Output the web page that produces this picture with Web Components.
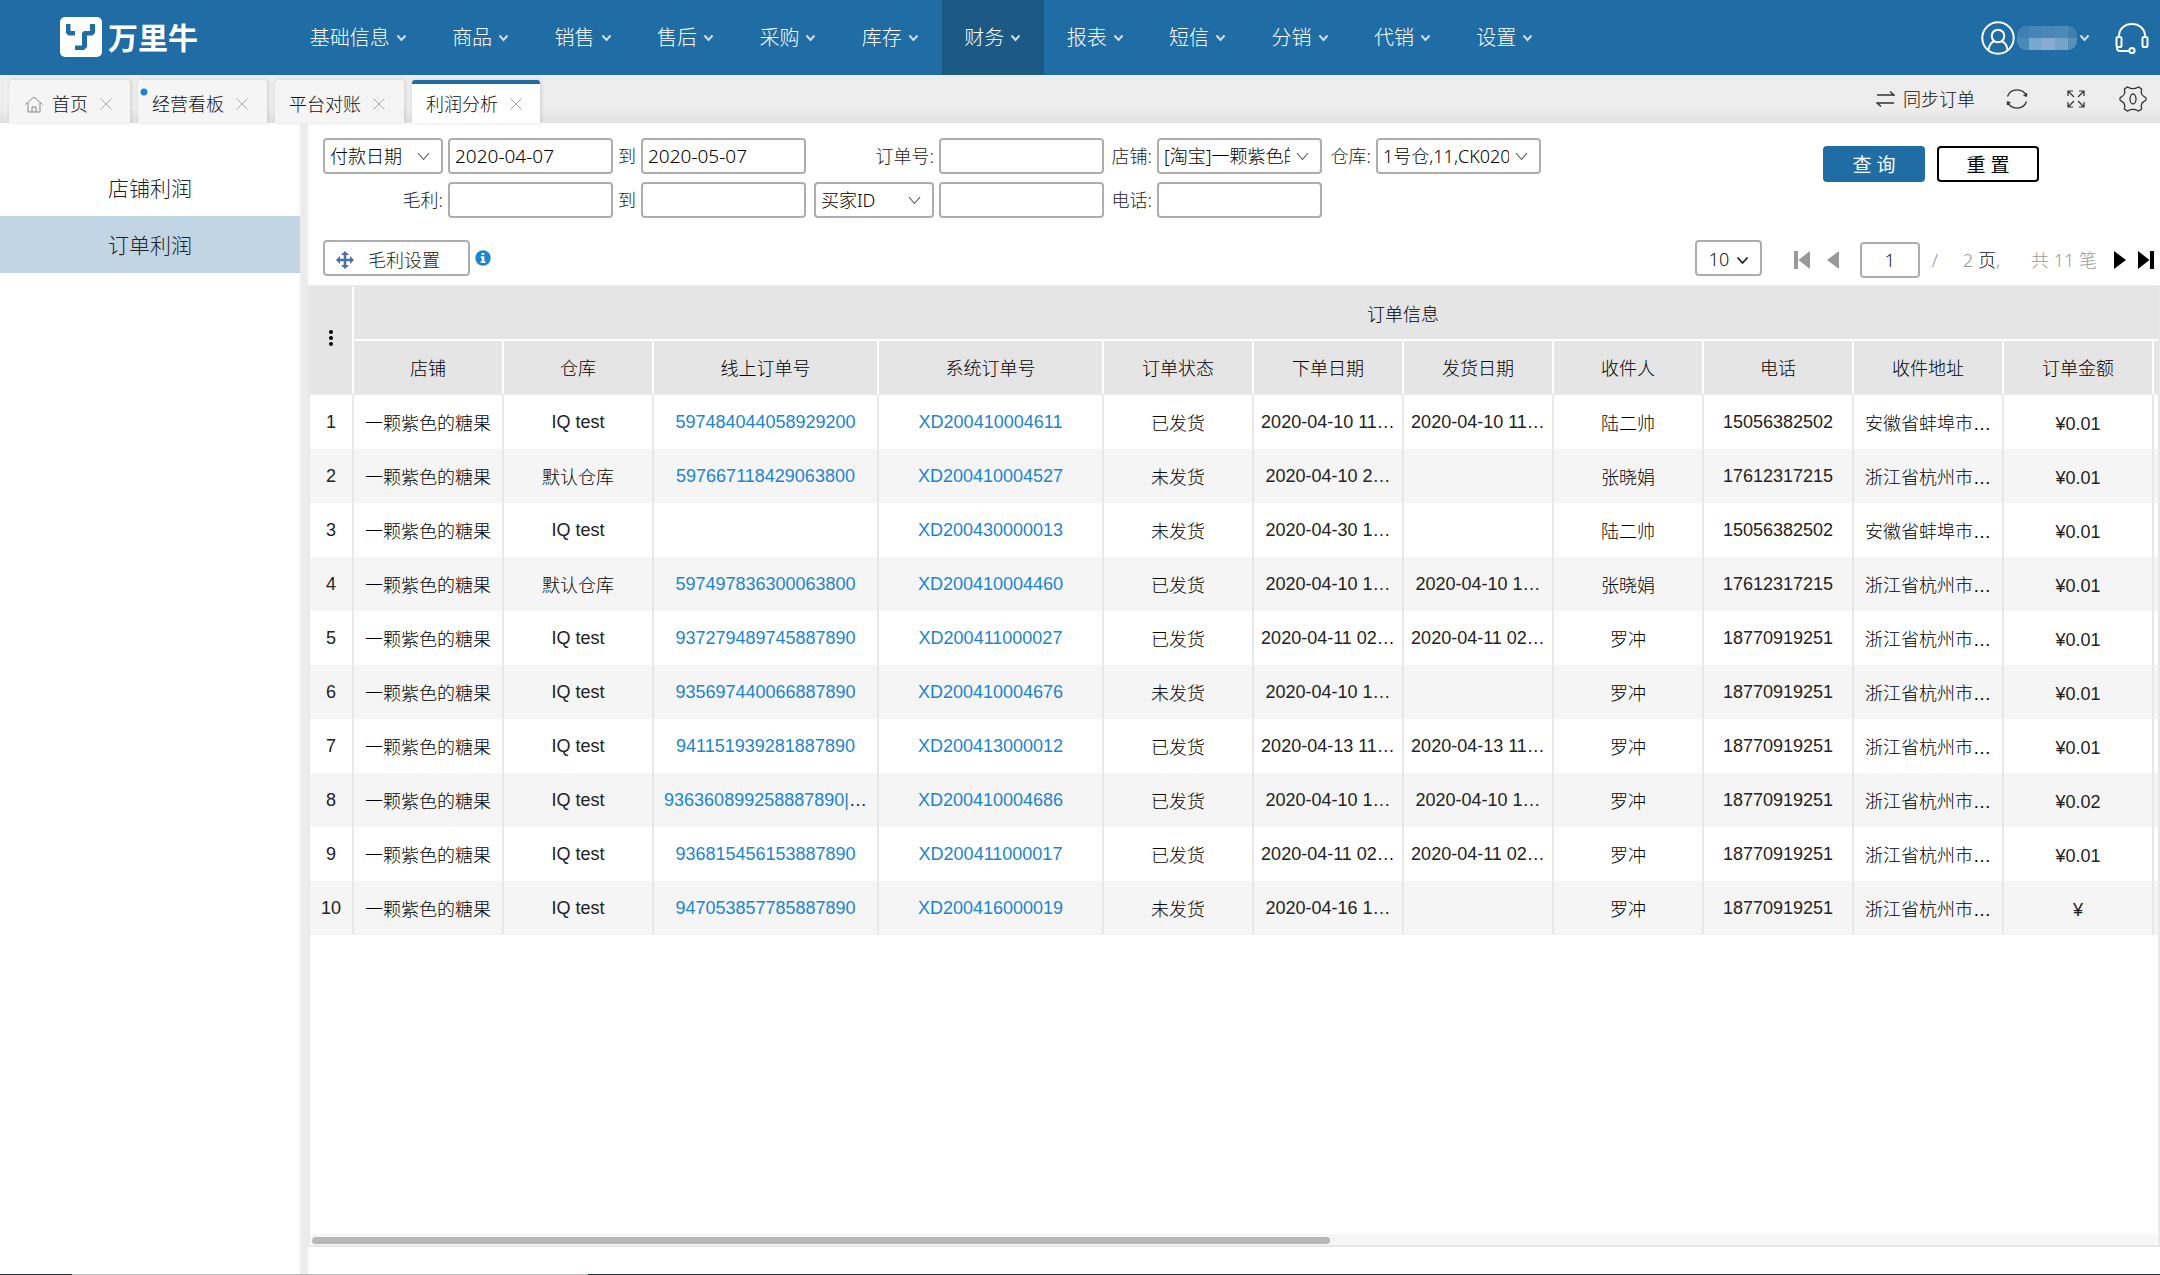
<!DOCTYPE html>
<html lang="zh-CN">
<head>
<meta charset="utf-8">
<title>万里牛 - 利润分析</title>
<style>
html, body { margin: 0; height: 100%; }
body { font: 300 18px/24px "Noto Sans", "Noto Sans CJK SC", sans-serif; color: #111; background: #fff; }
</style>
</head>
<body>
<erp-app></erp-app>
<script>
const BASE = `*{box-sizing:border-box}
button,input,select{font:inherit;color:inherit;margin:0}
button{background:none;border:0;padding:0;cursor:pointer}
a{color:inherit;text-decoration:none}
svg{display:block;flex:none}`;

function define(name, css, html) {
  const template = document.createElement('template');
  template.innerHTML = `<style>${BASE}${css}</style>${typeof html === 'string' ? html : ''}`;
  customElements.define(name, class extends HTMLElement {
    constructor() {
      super();
      this.attachShadow({ mode: 'open' }).append(template.content.cloneNode(true));
    }
    connectedCallback() {
      if (typeof html === 'function' && !this.ready) {
        this.ready = true;
        this.shadowRoot.append(document.createRange().createContextualFragment(html(this)));
      }
    }
  });
}

/* one entry of the main navigation */
define('nav-item', `
:host{display:flex;flex:1 1 auto}
a{flex:1;display:flex;align-items:center;justify-content:center;gap:6px;padding:0 22px;font-size:20px;color:#fff;white-space:nowrap}
:host([active]) a{background:#1c5985}`,
`<a href="#"><slot></slot><svg width="11" height="8" viewBox="0 0 11 8" fill="none" stroke="#cfe0ee" stroke-width="2"><path d="M1.5 1.5l4 4.5 4-4.5"/></svg></a>`);

define('app-header', `
:host{display:flex;height:75px;background:#206ca5;color:#fff;flex:none}
.brand{display:flex;align-items:center;gap:6px;width:287px;padding-left:60px;flex:none;font-size:30px;font-weight:700}
nav{display:flex;flex:0 1 1269px}
.user{display:flex;align-items:center;margin-left:auto;gap:2px}
.support{padding:0 11px 0 25px}
.mask{display:grid;grid-template-columns:12px repeat(3,13px) 9px;grid-template-rows:12px 12px;border-radius:9px;overflow:hidden}`,
`<a class="brand" href="#"><svg width="42" height="41" viewBox="0 0 42 41"><rect width="42" height="40" rx="5" fill="#fff"/><path d="M6 7h4.500v7H15v4.500H8.500L6 16zM30 7h5v9l-2.500 2.500H27V30l-3 3h-9v-4.500h7V16l2-2h6z" fill="#206ca5"/></svg><span>万里牛</span></a>
<nav><nav-item>基础信息</nav-item><nav-item>商品</nav-item><nav-item>销售</nav-item><nav-item>售后</nav-item><nav-item>采购</nav-item><nav-item>库存</nav-item><nav-item active>财务</nav-item><nav-item>报表</nav-item><nav-item>短信</nav-item><nav-item>分销</nav-item><nav-item>代销</nav-item><nav-item>设置</nav-item></nav>
<button class="user" aria-label="账户"><svg width="34" height="34" viewBox="0 0 34 34" fill="none" stroke="#fff" stroke-width="2"><circle cx="17" cy="17" r="15.7"/><circle cx="17" cy="15" r="6.3"/><path d="M7.500 29c.5-5 3-8 6.500-9M26.500 29c-.5-5-3-8-6.500-9"/></svg>
<span class="mask"><i style="background:#3f7fb1"></i><i style="background:#4585b7"></i><i style="background:#4888b7"></i><i style="background:#4c8ab8"></i><i style="background:#4280b0"></i><i style="background:#4a8aba"></i><i style="background:#78a9cc"></i><i style="background:#8cabd3"></i><i style="background:#76a3ca"></i><i style="background:#588fbd"></i></span>
<svg width="11" height="8" viewBox="0 0 11 8" fill="none" stroke="#cfe0ee" stroke-width="2"><path d="M1.500 1.500l4 4.500 4-4.500"/></svg></button>
<button class="support" aria-label="客服"><svg width="34" height="32" viewBox="0 0 34 32" fill="none" stroke="#fff" stroke-width="2"><path d="M4 15v-1C4 6.500 10 2 17 2s13 4.500 13 12v1"/><rect x="1.500" y="15" width="5" height="10" rx="1.500"/><rect x="27.500" y="15" width="5" height="10" rx="1.500"/><path d="M2 24v2c0 2 1 3 3 3h9"/><circle cx="17" cy="28.500" r="2.600"/></svg></button>`);

define('tab-item', `
:host{display:flex}
div{flex:1;display:flex;align-items:center;gap:12px;padding:5px 19px 0 14px;background:#f5f5f5;border-radius:3px 3px 0 0;box-shadow:1px 0 4px #0002}
:host([home]) div{padding:5px 18px 0 16px}
:host([active]) div{background:#fff;border-top:4px solid #206ca5;padding-top:1px;padding-right:18px}
a{display:flex;align-items:center;gap:9px}
:host([unread]) div{background:radial-gradient(circle at 6px 12px,#1c84d0 3px,#f5f5f5 4px)}`,
`<div><a href="#"><slot></slot></a><button aria-label="关闭"><svg width="12" height="12" viewBox="0 0 12 12" stroke="#aaa" stroke-width="1"><path d="M.5.500l11 11M11.500.500l-11 11"/></svg></button></div>`);

define('tab-bar', `
:host{display:flex;height:48px;flex:none;padding-left:9px;background:linear-gradient(#ededed 70%,#e0e0e0)}
.tabs{display:flex;gap:8px;padding-top:5px}
.tools{display:flex;align-items:center;margin-left:auto;padding:0 13px 0 0}
.tools button{display:flex;align-items:center;gap:8px}`,
`<div class="tabs">
<tab-item home><svg width="18" height="17" viewBox="0 0 18 17" fill="none" stroke="#888" stroke-width="1"><path d="M.5 8.500L9 1l8.500 7.500M3 7v9h12V7M7 16v-5h4v5"/></svg>首页</tab-item>
<tab-item unread>经营看板</tab-item><tab-item>平台对账</tab-item><tab-item active>利润分析</tab-item></div>
<div class="tools">
<button><svg width="19" height="18" viewBox="0 0 19 18" fill="none" stroke="#333" stroke-width="1.500"><path d="M1 5h17l-4-3.500M18 13H1l4 3.500"/></svg>同步订单</button>
<button aria-label="刷新" style="margin-left:31px"><svg width="22" height="22" viewBox="0 0 22 22" fill="none" stroke="#333" stroke-width="1.300"><path d="M1.500 8.500a10 9.500 0 0 1 19 0V5M20.500 13.500a10 9.500 0 0 1-19 0V17M20.500 8.500l-3-1.500M1.500 13.500l3 1.500"/></svg></button>
<button aria-label="全屏" style="margin-left:39px"><svg width="18" height="18" viewBox="0 0 18 18" fill="none" stroke="#333" stroke-width="1.200"><path d="M1 6V1h5M1 1l6 6M12 1h5v5M17 1l-6 6M1 12v5h5M1 17l6-6M17 12v5h-5M17 17l-6-6"/></svg></button>
<button aria-label="设置" style="margin-left:34px"><svg width="28" height="26" viewBox="0 0 28 26" fill="none" stroke="#333" stroke-width="1.300"><path d="M8.500 1c1 0 1.500 1.700 5.500 1.700S18.500 1 19.500 1l3 2c.5 1-.5 2-.3 3.500.3 2.500 1.500 3.500 3 4.200 1.500.5 2 1 2 2.300s-.5 1.800-2 2.300c-1.500.7-2.700 1.700-3 4.200-.2 1.500.8 2.500.3 3.500l-3 2c-1 0-1.500-1.700-5.500-1.700S9.500 25 8.500 25l-3-2c-.5-1 .5-2 .3-3.500-.3-2.500-1.500-3.500-3-4.200-1.500-.5-2-1-2-2.300s.5-1.800 2-2.300c1.500-.7 2.700-1.700 3-4.200C6 5 5 4 5.500 3z"/><ellipse cx="14" cy="13" rx="3" ry="5"/></svg></button>
</div>`);

define('side-menu', `
:host{display:block;flex:none;width:308px;border-right:8px solid #ececec;padding-top:36px}
a{display:flex;align-items:center;justify-content:center;height:57px;font-size:21px;color:#222}
a[aria-current]{background:#c2d5e4}`,
`<nav><a href="#">店铺利润</a><a href="#" aria-current="page">订单利润</a></nav>`);

const CHEVRON = `<svg width="13" height="9" viewBox="0 0 13 9" fill="none" stroke="#555" stroke-width="1.100"><path d="M1 1l5.500 6.500L12 1"/></svg>`;
define('filter-form', `
:host{display:flex;align-items:flex-start;padding:15px 121px 0 15px}
form{display:grid;grid-template-columns:120px 165px 18px 165px 123px 165px 43px 165px 44px 165px;column-gap:5px;row-gap:8px;align-items:center}
label,.to{justify-self:end;color:#222;white-space:nowrap}
input,select{width:100%;height:36px;border:2px solid #adadad;border-radius:4px;background:#fff;padding:0 5px;color:#000}
select{appearance:none;padding:0 30px 0 5px;grid-area:1/1}
.date{font-size:19px}
.pick{display:grid;align-items:center}
.pick svg{grid-area:1/1;justify-self:end;margin-right:13px;pointer-events:none}
.narrow{width:120px;justify-self:end}
.actions{display:flex;gap:12px;margin-left:auto;padding-top:8px}
.actions button{width:102px;height:36px;border-radius:4px;font-size:19px;font-weight:400;padding-top:2px}
.go{background:#206ca5;color:#fff}
.actions .clear{border:2px solid #000;color:#000}`,
`<form>
<span class="pick"><select aria-label="日期类型"><option>付款日期</option></select>${CHEVRON}</span>
<input class="date" aria-label="开始日期" value="2020-04-07"><span class="to">到</span><input class="date" aria-label="结束日期" value="2020-05-07">
<label for="order">订单号:</label><input id="order">
<label for="shop">店铺:</label><span class="pick"><select id="shop"><option>[淘宝]一颗紫色的糖果</option></select>${CHEVRON}</span>
<label for="store">仓库:</label><span class="pick"><select id="store"><option>1号仓,11,CK0200</option></select>${CHEVRON}</span>
<label for="min" style="grid-column:1">毛利:</label><input id="min"><span class="to">到</span><input aria-label="毛利上限">
<span class="pick narrow"><select aria-label="买家字段"><option>买家ID</option></select>${CHEVRON}</span><input aria-label="买家">
<label for="tel">电话:</label><input id="tel">
</form>
<div class="actions"><button class="go">查 询</button><button class="clear">重 置</button></div>`);

define('grid-toolbar', `
:host{display:flex;align-items:flex-start;padding:22px 6px 9px 15px;height:67px}
.set{display:flex;align-items:center;gap:14px;width:147px;height:36px;border:2px solid #adadad;border-radius:4px;padding:4px 0 0 11px;color:#222}
.info{padding:10px 0 0 5px}
.pager{display:flex;align-items:center;margin-left:auto;height:36px;color:#999;white-space:nowrap}
.size{display:grid;align-items:center;width:67px;margin-right:32px}
.size select{grid-area:1/1;appearance:none;height:36px;border:2px solid #adadad;border-radius:4px;background:#fff;padding:2px 0 0 12px;color:#111}
.size svg{grid-area:1/1;justify-self:end;margin:4px 13px 0 0;pointer-events:none}
.pager button{padding-top:4px}
.page{width:60px;height:36px;border:2px solid #adadad;border-radius:4px;text-align:center;color:#222;margin:4px 12px 0 21px;padding:0}
.text{display:flex;gap:31px;margin:4px 17px 0 0}
b{font-weight:inherit;color:#111}`,
`<button class="set"><svg width="18" height="18" viewBox="0 0 18 18" fill="#4d6fab"><path d="M9 0l4 4h-2.700v3.700H14V5l4 4-4 4v-2.700h-3.700V14H13l-4 4-4-4h2.700v-3.700H4V13L0 9l4-4v2.700h3.700V4H5z"/></svg>毛利设置</button>
<button class="info" aria-label="说明"><svg width="16" height="16" viewBox="0 0 16 16"><circle cx="8" cy="8" r="7.700" fill="#1c84d0"/><path d="M6.700 3h2.600v2H6.700zM5.800 6.300h3.500v4.700h1V13H5.800v-2h1V8.300h-1z" fill="#fff"/></svg></button>
<div class="pager">
<span class="size"><select aria-label="每页条数"><option>10</option></select><svg width="13" height="9" viewBox="0 0 13 9" fill="none" stroke="#222" stroke-width="1.800"><path d="M1.500 1.500l5 5.500 5-5.500"/></svg></span>
<button aria-label="首页"><svg width="16" height="18" viewBox="0 0 16 18" fill="#999"><path d="M0 0h4v18H0zM16 0v18L4.500 9z"/></svg></button>
<button aria-label="上一页" style="margin-left:17px"><svg width="12" height="18" viewBox="0 0 12 18" fill="#999"><path d="M12 0v18L0 9z"/></svg></button>
<input class="page" aria-label="页码" value="1">
<span class="text"><span style="margin-right:-6px">/</span><span>2 <b>页</b>,</span><span>共 11 笔</span></span>
<button aria-label="下一页"><svg width="12" height="18" viewBox="0 0 12 18"><path d="M0 0v18l12-9z"/></svg></button>
<button aria-label="末页" style="margin-left:12px"><svg width="16" height="18" viewBox="0 0 16 18"><path d="M12 0h4v18h-4zM0 0v18l11.500-9z"/></svg></button>
</div>`);

const S = '一颗紫色的糖果', Q = 'IQ test', D = '默认仓库', Y = '已发货', N = '未发货';
const L = ['陆二帅', '15056382502', '安徽省蚌埠市…'], Z = ['张晓娟', '17612317215', '浙江省杭州市…'], R = ['罗冲', '18770919251', '浙江省杭州市…'];
const ROWS = [
  [S, Q, '597484044058929200', 'XD200410004611', Y, '2020-04-10 11…', '2020-04-10 11…', ...L, '0.01'],
  [S, D, '597667118429063800', 'XD200410004527', N, '2020-04-10 2…', '', ...Z, '0.01'],
  [S, Q, '', 'XD200430000013', N, '2020-04-30 1…', '', ...L, '0.01'],
  [S, D, '597497836300063800', 'XD200410004460', Y, '2020-04-10 1…', '2020-04-10 1…', ...Z, '0.01'],
  [S, Q, '937279489745887890', 'XD200411000027', Y, '2020-04-11 02…', '2020-04-11 02…', ...R, '0.01'],
  [S, Q, '935697440066887890', 'XD200410004676', N, '2020-04-10 1…', '', ...R, '0.01'],
  [S, Q, '941151939281887890', 'XD200413000012', Y, '2020-04-13 11…', '2020-04-13 11…', ...R, '0.01'],
  [S, Q, '936360899258887890|', 'XD200410004686', Y, '2020-04-10 1…', '2020-04-10 1…', ...R, '0.02'],
  [S, Q, '936815456153887890', 'XD200411000017', Y, '2020-04-11 02…', '2020-04-11 02…', ...R, '0.01'],
  [S, Q, '947053857785887890', 'XD200416000019', N, '2020-04-16 1…', '', ...R, '']
];
const HEADS = ['店铺', '仓库', '线上订单号', '系统订单号', '订单状态', '下单日期', '发货日期', '收件人', '电话', '收件地址', '订单金额', '', ''];
const WIDTHS = [44, 150, 150, 225, 225, 150, 150, 150, 150, 150, 150, 150, 150, 150];
const cell = (v, i) => {
  if (i === 10) return `<td class="cn money"><span class="yen">¥</span>${v}</td>`;
  if ((i === 2 || i === 3) && v) return `<td><a href="#">${v}</a>${v.endsWith('|') ? '…' : ''}</td>`;
  return `<td${/^[\u4e00-\u9fff]/.test(v) ? ' class="cn"' : ''}>${v}</td>`;
};

define('order-table', `
:host{display:flex;flex-direction:column;flex:1;min-width:0;border:2px solid #e8e8e8;font-family:"Liberation Sans","Noto Sans CJK SC",sans-serif}
.view{flex:1;overflow:hidden}
table{width:${WIDTHS.reduce((a, b) => a + b)}px;table-layout:fixed;border-collapse:separate;border-spacing:0}
th,td{height:54px;padding:0 4px;text-align:center;font-weight:inherit;white-space:nowrap;overflow:hidden;border-right:2px solid #e8e8e8;line-height:24px;color:#222}
th{background:#e5e5e5;color:#000;border-right-color:#fff;padding-top:4px}
.group{border-bottom:2px solid #fff}
.sub th,.idx{border-bottom:2px solid #e8e8e8}
tbody tr:nth-child(even){background:#f5f5f5}
.cn{padding-top:4px;color:#000}
.money{color:#222}
td a{color:#1c84d0}
.yen{margin-right:5px}
.yen:last-child{margin:0}
.idx{padding:0 4px 4px}
.idx svg{margin:0 auto}
.bar{height:11px;background:#f6f6f6;border-radius:5px;padding:3px 2px 1px}
.bar div{width:55.2%;height:7px;border-radius:4px;background:#b7b8b8}`,
() => `<div class="view"><table><colgroup>${WIDTHS.map(w => `<col style="width:${w}px">`).join('')}</colgroup>
<thead><tr><th class="idx" rowspan="2"><svg width="4" height="16" viewBox="0 0 4 16"><circle cx="2" cy="2" r="2"/><circle cx="2" cy="8" r="2"/><circle cx="2" cy="14" r="2"/></svg></th><th class="group" colspan="13">订单信息</th></tr>
<tr class="sub">${HEADS.map(h => `<th>${h}</th>`).join('')}</tr></thead>
<tbody>${ROWS.map((r, n) => `<tr><td>${n + 1}</td>${r.map(cell).join('')}<td></td><td></td></tr>`).join('')}</tbody></table></div>
<div class="bar"><div></div></div>`);

define('erp-app', `
:host{display:flex;flex-direction:column;min-height:100vh}
.body{display:flex;flex:1}
main{display:flex;flex-direction:column;flex:1;min-width:0}
footer{height:1px;background:linear-gradient(90deg,#222b33 72px,#bbb 72px 588px,#222b33 588px)}
order-table{margin-bottom:27px}`,
`<app-header></app-header><tab-bar></tab-bar>
<div class="body"><side-menu></side-menu><main><filter-form></filter-form><grid-toolbar></grid-toolbar><order-table></order-table></main></div>
<footer></footer>`);
</script>
</body>
</html>
